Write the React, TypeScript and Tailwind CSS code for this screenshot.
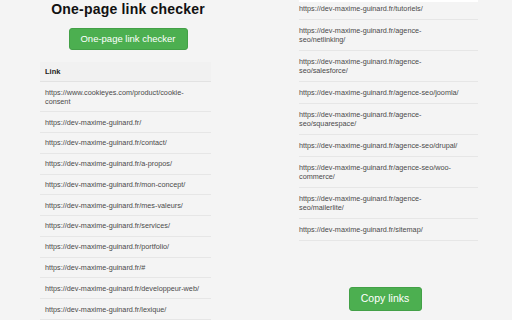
const leftLinks = [
  "https://www.cookieyes.com/product/cookie-consent",
  "https://dev-maxime-guinard.fr/",
  "https://dev-maxime-guinard.fr/contact/",
  "https://dev-maxime-guinard.fr/a-propos/",
  "https://dev-maxime-guinard.fr/mon-concept/",
  "https://dev-maxime-guinard.fr/mes-valeurs/",
  "https://dev-maxime-guinard.fr/services/",
  "https://dev-maxime-guinard.fr/portfolio/",
  "https://dev-maxime-guinard.fr/#",
  "https://dev-maxime-guinard.fr/developpeur-web/",
  "https://dev-maxime-guinard.fr/lexique/",
];

const rightLinks = [
  "https://dev-maxime-guinard.fr/tutoriels/",
  "https://dev-maxime-guinard.fr/agence-seo/netlinking/",
  "https://dev-maxime-guinard.fr/agence-seo/salesforce/",
  "https://dev-maxime-guinard.fr/agence-seo/joomla/",
  "https://dev-maxime-guinard.fr/agence-seo/squarespace/",
  "https://dev-maxime-guinard.fr/agence-seo/drupal/",
  "https://dev-maxime-guinard.fr/agence-seo/woo-commerce/",
  "https://dev-maxime-guinard.fr/agence-seo/mailerlite/",
  "https://dev-maxime-guinard.fr/sitemap/",
];

export default function App() {
  return (
    <div
      className="w-[512px] h-[320px] overflow-hidden bg-[#f4f4f4] flex"
      style={{ fontFamily: '"Liberation Sans", Arial, sans-serif' }}
    >
      {/* left panel */}
      <div className="w-[256px] flex flex-col items-center">
        <h1 className="text-[14px] leading-[18px] font-bold text-[#111] tracking-[0.2px]">
          One-page link checker
        </h1>
        <button className="mt-[10px] w-[119px] h-[23px] rounded-[3px] bg-[#4caf50] border border-[#43a047] text-white text-[9.5px]">
          One-page link checker
        </button>
        <div className="mt-[12px] w-[171px] ml-[-5px]">
          <div className="h-[20px] bg-[#f1f1f1] border-b border-[#e2e2e2] pl-[5px] flex items-center text-[7.5px] font-bold text-[#222]">
            Link
          </div>
          {leftLinks.map((l) => (
            <div
              key={l}
              className="border-b border-[#e6e6e6] pl-[5px] pr-[8px] py-[5.4px] text-[7.25px] leading-[9px] text-[#4a4a4a] break-words"
            >
              {l}
            </div>
          ))}
        </div>
      </div>

      {/* right panel */}
      <div className="w-[256px] flex flex-col">
        <div className="ml-[43px] w-[179px]">
          <div className="h-[2px] bg-white" />
          <div className="border-b border-[#e6e6e6] pr-[16px] pt-[2px] pb-[6px] text-[7.25px] leading-[9px] text-[#4a4a4a]">
            {rightLinks[0]}
          </div>
          {rightLinks.slice(1).map((l) => (
            <div
              key={l}
              className="border-b border-[#e6e6e6] pr-[16px] py-[6px] text-[7.25px] leading-[9px] text-[#4a4a4a] break-words"
            >
              {l}
            </div>
          ))}
        </div>
        <div className="flex justify-center mt-[46px] ml-[2px]">
          <button className="w-[73px] h-[24px] rounded-[3px] bg-[#4caf50] border border-[#43a047] text-white text-[10.5px]">
            Copy links
          </button>
        </div>
      </div>
    </div>
  );
}
